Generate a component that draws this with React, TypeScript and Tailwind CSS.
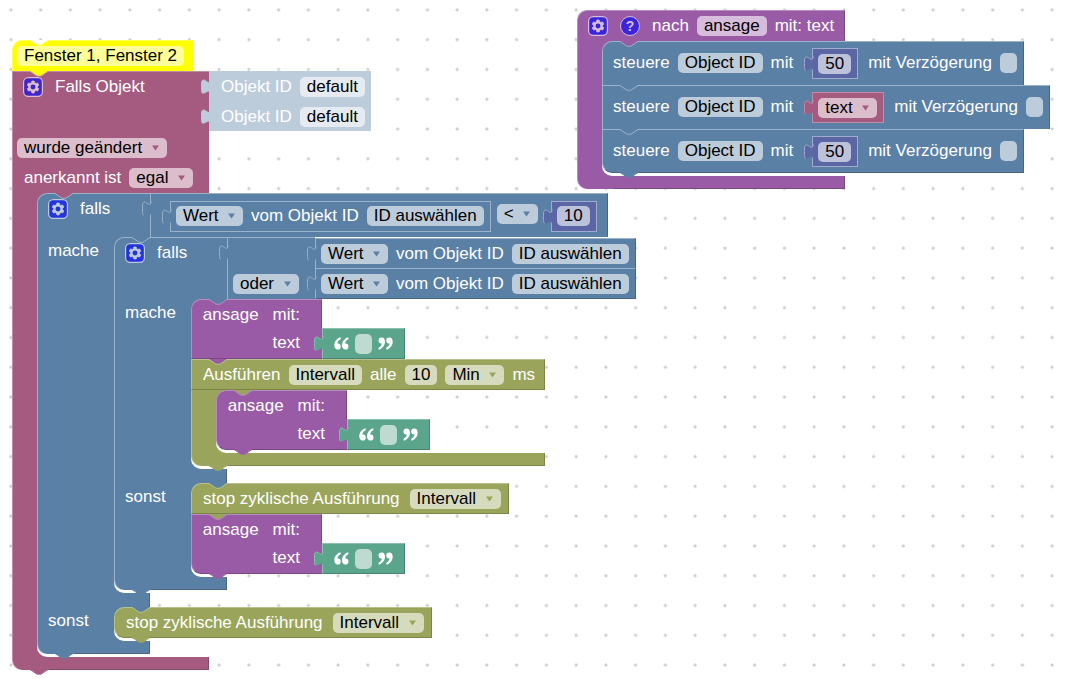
import { createContext, useContext, type ReactNode } from "react";
import { clsx } from "clsx";

type Theme = { bg: string; light: string; arrow: string; dark: string; fill: string; edge: string };

const THEMES = {
    yellow: { bg: "bg-[#ffff00]", light: "border-[#ffff4d]", dark: "border-[#cccc00]", arrow: "text-[#cccc00]", fill: "#ffff00", edge: "#ffff4d" },
    trigger: { bg: "bg-[#a55b80]", light: "border-[#c08ca6]", dark: "border-[#844966]", arrow: "text-[#a55b80]", fill: "#a55b80", edge: "#c08ca6" },
    logic: { bg: "bg-[#5b80a5]", light: "border-[#9ab2ca]", dark: "border-[#496684]", arrow: "text-[#5b80a5]", fill: "#5b80a5", edge: "#9ab2ca" },
    procedure: { bg: "bg-[#995ba5]", light: "border-[#b88cc0]", dark: "border-[#7a4984]", arrow: "text-[#995ba5]", fill: "#995ba5", edge: "#b88cc0" },
    timer: { bg: "bg-[#9aa55b]", light: "border-[#b8c08c]", dark: "border-[#7b8449]", arrow: "text-[#9aa55b]", fill: "#9aa55b", edge: "#b8c08c" },
    text: { bg: "bg-[#5ba58c]", light: "border-[#8cc0ae]", dark: "border-[#498470]", arrow: "text-[#5ba58c]", fill: "#5ba58c", edge: "#8cc0ae" },
    math: { bg: "bg-[#5b67a5]", light: "border-[#a3aad0]", dark: "border-[#495284]", arrow: "text-[#5b67a5]", fill: "#5b67a5", edge: "#a3aad0" },
    shadow: { bg: "bg-[#bdccdb]", light: "border-[#bdccdb]", dark: "border-[#bdccdb]", arrow: "text-[#bdccdb]", fill: "#bdccdb", edge: "#bdccdb" },
} satisfies Record<string, Theme>;

const BlockTheme = createContext<Theme>(THEMES.logic);
const CANVAS = "#ffffff";

/* ---------- connectors ---------- */

function Notch({ fill, edge, bottom }: { fill: string; edge: string; bottom?: boolean }) {
    return (
        <svg
            className={clsx("absolute left-[18px] h-[6px] w-[18px]", bottom ? "top-full -mt-px" : "top-0")}
            viewBox="0 0 18 6"
            aria-hidden="true"
        >
            <path d="M0 0 L7 5 H11 L18 0 Z" fill={fill} />
            <path d="M0 .5 L7 5.2 H11 L18 .5" fill="none" stroke={edge} />
        </svg>
    );
}

function PuzzleTab() {
    const t = useContext(BlockTheme);
    return (
        <svg className="absolute top-[5px] -left-[9px] h-[18px] w-[11px]" viewBox="0 0 11 18" aria-hidden="true">
            <path d="M11 2 H9 C9 9 5 3 2.5 3 C.5 3 .5 6 .5 9.5 C.5 14 .5 16.5 2.5 16.5 C5 16.5 9 11 9 18 H11 Z" fill={t.fill} />
            <path d="M9 2 C9 9 5 3 2.5 3 C.5 3 .5 6 .5 9.5 C.5 14 .5 16 1.8 16.3" fill="none" stroke={t.edge} />
        </svg>
    );
}

/* ---------- fields ---------- */

const CHIP = "h-5 rounded-[5px] bg-white/60 px-[7px] leading-5 text-black outline-none";

function TextField({ label, value = "" }: { label: string; value?: string }) {
    return <input aria-label={label} defaultValue={value} className={clsx(CHIP, "field-sizing-content min-w-[17px] shrink-0")} />;
}

function PickField({ children }: { children: string }) {
    return <button type="button" className={clsx(CHIP, "shrink-0 whitespace-nowrap")}>{children}</button>;
}

function Dropdown({ label, value }: { label: string; value: string }) {
    const t = useContext(BlockTheme);
    return (
        <span className="relative flex w-max shrink-0">
            <select aria-label={label} className={clsx(CHIP, "appearance-none pr-6")}>
                <option>{value}</option>
            </select>
            <svg className={clsx("pointer-events-none absolute top-[7px] right-2 h-[6px] w-[7px]", t.arrow)} viewBox="0 0 7 6" aria-hidden="true">
                <path d="M0 .5 H7 L3.5 5.5 Z" fill="currentColor" />
            </svg>
        </span>
    );
}

function Txt({ children }: { children: string }) {
    return <span className="shrink-0 whitespace-nowrap">{children}</span>;
}

function Gear() {
    return (
        <button type="button" aria-label="Mutator" className="shrink-0 opacity-60">
            <svg className="size-5" viewBox="-0.5 -0.5 17 17" aria-hidden="true">
                <rect width="16" height="16" rx="4" fill="#00f" stroke="#fff" />
                <path
                    fill="#fff"
                    stroke="#fff"
                    strokeWidth=".6"
                    d="m4.203,7.296 0,1.368 -0.92,0.677 -0.11,0.41 0.9,1.559 0.41,0.11 1.043,-0.457 1.187,0.683 0.127,1.134 0.3,0.3 1.8,0 0.3,-0.299 0.127,-1.138 1.185,-0.682 1.046,0.458 0.409,-0.11 0.9,-1.559 -0.11,-0.41 -0.92,-0.677 0,-1.366 0.92,-0.677 0.11,-0.41 -0.9,-1.559 -0.409,-0.109 -1.046,0.458 -1.185,-0.682 -0.127,-1.138 -0.3,-0.299 -1.8,0 -0.3,0.3 -0.126,1.135 -1.187,0.682 -1.043,-0.457 -0.41,0.11 -0.899,1.559 0.108,0.409z"
                />
                <circle cx="8" cy="8" r="2.1" fill="#00f" />
            </svg>
        </button>
    );
}

function Help() {
    return (
        <button
            type="button"
            aria-label="Hilfe"
            className="flex size-5 shrink-0 items-center justify-center rounded-full border border-white bg-[#0000ff] text-sm font-bold opacity-60"
        >
            ?
        </button>
    );
}

function Quote({ closing }: { closing?: boolean }) {
    const mark = "M6.4 .3C2.6 1.6 .3 4.8 .3 8.3c0 2.7 1.3 4.2 3.3 4.2a3.1 3.1 0 0 0 3.2-3.1c0-1.8-1.2-3-2.7-3-.3 0-.5 0-.7.1.3-1.9 1.6-3.4 3.5-4.4z";
    return (
        <svg className={clsx("h-[13px] w-[15px] shrink-0", closing && "rotate-180")} viewBox="0 0 15 13" fill="#fff" aria-hidden="true">
            <path d={mark} />
            <path d={mark} transform="translate(7.7 0)" />
        </svg>
    );
}

/* ---------- block parts ---------- */

type BlockProps = { theme: Theme; above: string; width?: string; last?: boolean; plain?: boolean; children: ReactNode };

function Block({ theme, above, width = "w-max", last, plain, children }: BlockProps) {
    return (
        <BlockTheme.Provider value={theme}>
            <div className={clsx("relative", width)}>
                {children}
                {!plain && <Notch fill={above} edge={theme.edge} />}
                {last && <Notch fill={theme.fill} edge={theme.fill} bottom />}
            </div>
        </BlockTheme.Provider>
    );
}

type RowProps = { className?: string; value?: ReactNode; children?: ReactNode };

// One line of a block; `value` is plugged in on its right hand side.
function Row({ className, value, children }: RowProps) {
    const t = useContext(BlockTheme);
    return (
        <div className="flex">
            <div className={clsx("flex w-full shrink-0 items-start border-l", t.bg, t.light, className)}>
                <div className="flex h-[29px] items-center gap-2">{children}</div>
            </div>
            {value}
        </div>
    );
}

// Statement input: coloured arm on the left, the nested stack beside it.
function Body({ arm, label, children }: { arm: string; label?: string; children: ReactNode }) {
    const t = useContext(BlockTheme);
    return (
        <div className="flex">
            <div className={clsx("shrink-0 border-l", arm, t.bg, t.light)}>
                {label && <div className="flex h-7 items-center pl-[10px]">{label}</div>}
            </div>
            <div className="relative pb-[3px]">
                <div className={clsx("absolute inset-y-0 left-0 w-3", t.bg)} />
                <div className="absolute inset-y-0 left-0 w-9 rounded-l-[10px] bg-white" />
                <div className={clsx("absolute top-0 left-0 size-3", t.bg)} />
                <div className="relative">{children}</div>
            </div>
        </div>
    );
}

function Bar({ middle }: { middle?: boolean }) {
    const t = useContext(BlockTheme);
    return (
        <div className={clsx("border-l", t.bg, t.light, middle ? "h-[14px]" : "h-[13px] rounded-bl-[10px]")}>
            <div className={clsx("ml-9 h-full border-r", t.dark, !middle && "border-b")} />
        </div>
    );
}

function Value({ theme, className, children }: { theme: Theme; className?: string; children: ReactNode }) {
    return (
        <BlockTheme.Provider value={theme}>
            <div className={clsx("relative flex shrink-0 border-t border-l", theme.bg, theme.light, className)}>
                <PuzzleTab />
                {children}
            </div>
        </BlockTheme.Provider>
    );
}

/* ---------- blocks ---------- */

const { yellow, trigger, logic, procedure, timer, text, math, shadow } = THEMES;

function ObjectRef() {
    return (
        <Value theme={shadow} className="h-[30px] items-center gap-2 pr-[6px] pl-[11px]">
            <Txt>Objekt ID</Txt>
            <PickField>default</PickField>
        </Value>
    );
}

function ObjectValue({ className }: { className?: string }) {
    return (
        <Value theme={logic} className={clsx("items-center gap-2 pr-[6px] pl-[5px]", className)}>
            <Dropdown label="Attribut" value="Wert" />
            <Txt>vom Objekt ID</Txt>
            <PickField>ID auswählen</PickField>
        </Value>
    );
}

function NumberValue({ value }: { value: string }) {
    return (
        <Value theme={math} className="h-[31px] items-center border-r border-b pr-[6px] pl-[5px]">
            <TextField label="Zahl" value={value} />
        </Value>
    );
}

function EmptyText() {
    return (
        <Value theme={text} className="h-[31px] items-center gap-1.5 border-r border-b border-r-[#498470] border-b-[#498470] px-[11px]">
            <Quote />
            <TextField label="Text" />
            <Quote closing />
        </Value>
    );
}

function Compare() {
    return (
        <Value theme={logic} className="h-11 items-start border-r border-r-[#496684] pr-[10px] pl-[19px]">
            <div className="flex h-11 items-center">
                <ObjectValue className="h-[31px] border-r border-b" />
            </div>
            <div className="flex h-10 items-center pr-[13px] pl-1.5">
                <Dropdown label="Vergleich" value="<" />
            </div>
            <div className="flex h-11 items-center">
                <NumberValue value="10" />
            </div>
        </Value>
    );
}

function Or() {
    return (
        <Value theme={logic} className="h-[62px] flex-col">
            <div className="flex h-[30px] w-[87px] shrink-0 items-center">
                <div className="w-full shrink-0" />
                <ObjectValue className="h-[30px] border-r border-r-[#496684]" />
            </div>
            <div className="flex h-[31px] w-[87px] shrink-0 items-center">
                <div className="w-full shrink-0 pl-[5px]">
                    <Dropdown label="Verknüpfung" value="oder" />
                </div>
                <ObjectValue className="h-[31px] border-r border-b border-r-[#496684] border-b-[#496684]" />
            </div>
        </Value>
    );
}

function Announce({ above, first, last }: { above: string; first?: boolean; last?: boolean }) {
    return (
        <Block theme={procedure} above={above} last={last} width="w-[131px]">
            <Row className={clsx("h-[29px] justify-end border-t border-r border-r-[#7a4984] pr-[21px]", first && "rounded-tl-[10px]")}>
                <Txt>ansage</Txt>
                <span className="pl-1.5">mit:</span>
            </Row>
            <Row
                className={clsx("h-[31px] justify-end border-b border-b-[#7a4984] pr-[22px]", last && "rounded-bl-[10px]")}
                value={<EmptyText />}
            >
                <Txt>text</Txt>
            </Row>
        </Block>
    );
}

function StopInterval({ last }: { last?: boolean }) {
    return (
        <Block theme={timer} above={logic.fill} last={last}>
            <Row className={clsx("h-[31px] rounded-tl-[10px] border-t border-r border-b border-r-[#7b8449] border-b-[#7b8449] pr-[7px] pl-[11px]", last && "rounded-bl-[10px]")}>
                <span className="shrink-0 pr-0.5 whitespace-nowrap">stop zyklische Ausführung</span>
                <Dropdown label="Timer" value="Intervall" />
            </Row>
        </Block>
    );
}

function Interval({ children }: { children: ReactNode }) {
    return (
        <Block theme={timer} above={procedure.fill} last width="w-[354px]">
            <Row className="h-[31px] border-t border-r border-b border-r-[#7b8449] border-b-[#7b8449] pl-[11px]">
                <Txt>Ausführen</Txt>
                <TextField label="Name" value="Intervall" />
                <Txt>alle</Txt>
                <TextField label="Dauer" value="10" />
                <Dropdown label="Einheit" value="Min" />
                <Txt>ms</Txt>
            </Row>
            <Body arm="w-[25px]">{children}</Body>
            <Bar />
        </Block>
    );
}

type IfProps = { above: string; height: string; condition: ReactNode; then: ReactNode; otherwise: ReactNode };

function IfElse({ above, height, condition, then, otherwise }: IfProps) {
    return (
        <Block theme={logic} above={above} last width="w-[113px]">
            <Row className={clsx("rounded-tl-[10px] border-t pl-[10px]", height)} value={condition}>
                <Gear />
                <span className="pl-1">falls</span>
            </Row>
            <Body arm="w-[77px]" label="mache">{then}</Body>
            <Bar middle />
            <Body arm="w-[77px]" label="sonst">{otherwise}</Body>
            <Bar />
        </Block>
    );
}

function Control({ above, first, last, children }: { above: string; first?: boolean; last?: boolean; children: ReactNode }) {
    return (
        <Block theme={logic} above={above} last={last}>
            <div
                className={clsx(
                    "flex h-11 items-start border-t border-r border-l border-[#9ab2ca] border-r-[#496684] bg-[#5b80a5] pr-[6px] pl-[10px]",
                    first && "rounded-tl-[10px]",
                    last && "rounded-bl-[10px] border-b border-b-[#496684]",
                )}
            >
                <div className="flex h-[41px] items-center gap-2">
                    <Txt>steuere</Txt>
                    <PickField>Object ID</PickField>
                    <Txt>mit</Txt>
                </div>
                <div className="flex h-[43px] items-center pr-[10px] pl-[19px]">{children}</div>
                <div className="flex h-[41px] items-center gap-2">
                    <Txt>mit Verzögerung</Txt>
                    <TextField label="Verzögerung" />
                </div>
            </div>
        </Block>
    );
}

/* ---------- scripts ---------- */

function TriggerScript() {
    return (
        <section className="absolute top-10 left-3">
            <Block theme={yellow} above={CANVAS} width="w-[181px]">
                <Row className="h-[31px] rounded-tl-[10px] border-t pl-1">
                    <TextField label="Kommentar" value="Fenster 1, Fenster 2" />
                </Row>
            </Block>
            <Block theme={trigger} above={yellow.fill} last width="w-[197px]">
                <Row className="h-[30px] border-t pl-[10px]" value={<ObjectRef />}>
                    <Gear />
                    <span className="pl-1">Falls Objekt</span>
                </Row>
                <Row className="h-8" value={<ObjectRef />} />
                <Row className="h-[30px] pl-[4px]">
                    <Dropdown label="Bedingung" value="wurde geändert" />
                </Row>
                <Row className="h-[30px] pl-[11px]">
                    <Txt>anerkannt ist</Txt>
                    <Dropdown label="Anerkannt" value="egal" />
                </Row>
                <Body arm="w-[25px]">
                    <IfElse
                        above={trigger.fill}
                        height="h-11"
                        condition={<Compare />}
                        then={
                            <IfElse
                                above={logic.fill}
                                height="h-[62px]"
                                condition={<Or />}
                                then={
                                    <>
                                        <Announce above={logic.fill} first />
                                        <Interval>
                                            <Announce above={timer.fill} first last />
                                        </Interval>
                                    </>
                                }
                                otherwise={
                                    <>
                                        <StopInterval />
                                        <Announce above={timer.fill} last />
                                    </>
                                }
                            />
                        }
                        otherwise={<StopInterval last />}
                    />
                </Body>
                <Bar />
            </Block>
        </section>
    );
}

function AnnounceProcedure() {
    return (
        <section className="absolute top-[10px] left-[577px]">
            <Block theme={procedure} above={CANVAS} plain width="w-[268px]">
                <Row className="h-[31px] rounded-tl-[10px] border-t border-r border-r-[#7a4984] pl-[10px]">
                    <Gear />
                    <span className="flex px-1">
                        <Help />
                    </span>
                    <Txt>nach</Txt>
                    <TextField label="Name" value="ansage" />
                    <Txt>mit: text</Txt>
                </Row>
                <Body arm="w-[25px]">
                    <Control above={procedure.fill} first>
                        <NumberValue value="50" />
                    </Control>
                    <Control above={logic.fill}>
                        <Value theme={trigger} className="h-[31px] items-center border-r border-b pr-[6px] pl-[5px]">
                            <Dropdown label="Variable" value="text" />
                        </Value>
                    </Control>
                    <Control above={logic.fill} last>
                        <NumberValue value="50" />
                    </Control>
                </Body>
                <Bar />
            </Block>
        </section>
    );
}

export default function App() {
    return (
        <main className="relative h-screen min-h-[679px] overflow-hidden bg-white font-['Liberation_Sans',Arial,sans-serif] text-[17px] leading-5 text-white">
            <div className="absolute -top-[5px] -right-px -bottom-px -left-1 bg-[radial-gradient(circle,#cccccc_1px,transparent_2px)] bg-size-[30px_30px] bg-repeat-round" />
            <TriggerScript />
            <AnnounceProcedure />
        </main>
    );
}
